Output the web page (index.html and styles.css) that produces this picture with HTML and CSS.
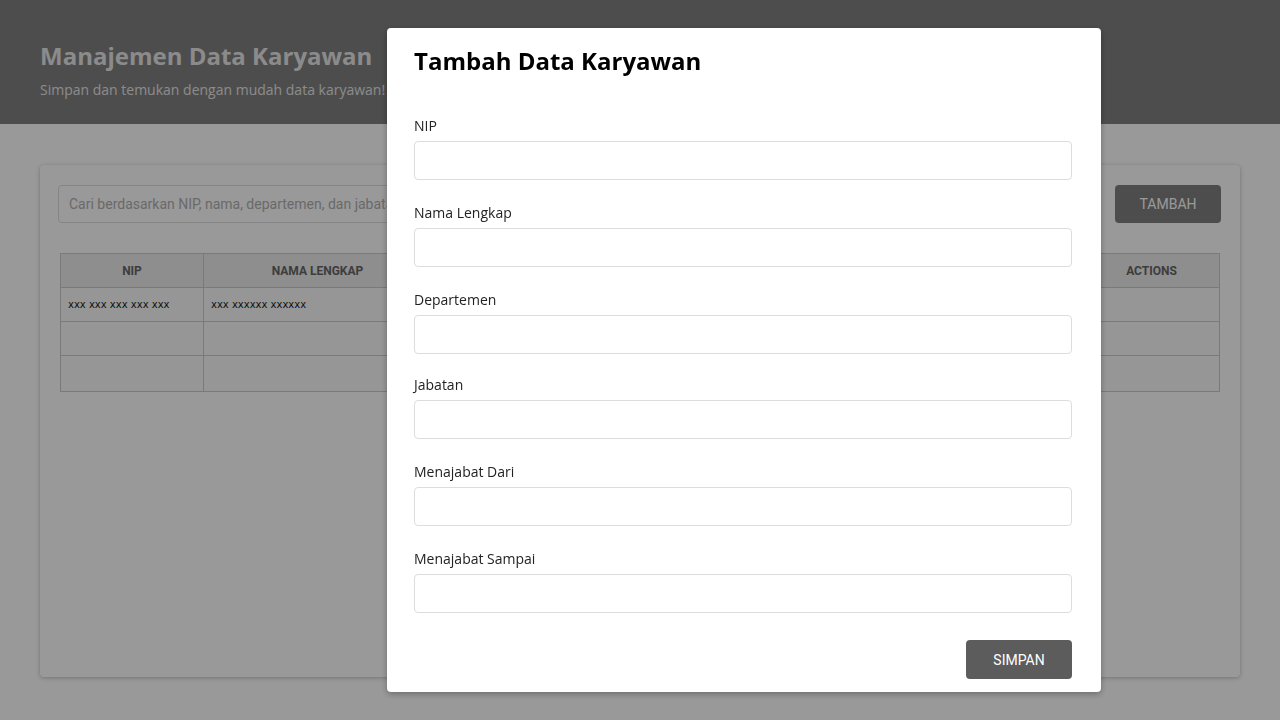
FILE: index.html
```html
<!DOCTYPE html>
<html lang="id">
<head>
<meta charset="utf-8">
<title>Manajemen Data Karyawan</title>
<link rel="stylesheet" href="styles.css">
</head>
<body>
<header class="hero">
  <h1 class="hero-title">Manajemen Data Karyawan</h1>
  <p class="hero-sub">Simpan dan temukan dengan mudah data karyawan!</p>
</header>
<main class="content">
  <section class="card">
    <div class="toolbar">
      <input class="search" type="text" placeholder="Cari berdasarkan NIP, nama, departemen, dan jabatan">
      <button class="btn btn-add">TAMBAH</button>
    </div>
    <table class="table">
      <thead>
        <tr>
          <th class="c-nip">NIP</th>
          <th class="c-nama">NAMA LENGKAP</th>
          <th>DEPARTEMEN</th>
          <th>JABATAN</th>
          <th>MENJABAT DARI</th>
          <th>MENJABAT SAMPAI</th>
          <th class="c-act">ACTIONS</th>
        </tr>
      </thead>
      <tbody>
        <tr><td>xxx xxx xxx xxx xxx</td><td>xxx xxxxxx xxxxxx</td><td></td><td></td><td></td><td></td><td></td></tr>
        <tr><td></td><td></td><td></td><td></td><td></td><td></td><td></td></tr>
        <tr class="last"><td></td><td></td><td></td><td></td><td></td><td></td><td></td></tr>
      </tbody>
    </table>
  </section>
</main>
<div class="overlay"></div>
<div class="modal">
  <h2 class="modal-title">Tambah Data Karyawan</h2>
  <form class="form">
    <div class="field"><label>NIP</label><input type="text"></div>
    <div class="field"><label>Nama Lengkap</label><input type="text"></div>
    <div class="field field-tight"><label>Departemen</label><input type="text"></div>
    <div class="field"><label>Jabatan</label><input type="text"></div>
    <div class="field"><label>Menajabat Dari</label><input type="text"></div>
    <div class="field"><label>Menajabat Sampai</label><input type="text"></div>
    <div class="actions"><button type="button" class="btn btn-save">SIMPAN</button></div>
  </form>
</div>
</body>
</html>
```
FILE: styles.css
```css
* { box-sizing: border-box; }
html, body { margin: 0; padding: 0; }
body {
  width: 1280px;
  height: 720px;
  overflow: hidden;
  background: #fff;
  font-family: "Open Sans", sans-serif;
}
.hero {
  height: 124px;
  background: #808080;
  padding: 39px 40px 0;
}
.hero-title {
  margin: 0;
  font-size: 24px;
  line-height: 34px;
  font-weight: 700;
  color: #e8e8e8;
}
.hero-sub {
  margin: 7px 0 0;
  font-size: 14px;
  line-height: 20px;
  color: #e8e8e8;
}
.content {
  padding: 41px 40px 0;
}
.card {
  height: 512px;
  background: #fff;
  border-radius: 4px;
  box-shadow: 0 1px 4px rgba(0,0,0,0.25);
  padding: 20px 18px;
}
.toolbar {
  display: flex;
  gap: 15px;
}
.search {
  flex: 1;
  height: 38px;
  border: 1px solid #ddd;
  border-radius: 4px;
  padding: 0 10px;
  font-family: Roboto, sans-serif;
  font-size: 14px;
}
.search::placeholder { color: #b0b0b0; }
.btn {
  border: none;
  border-radius: 4px;
  color: #fff;
  font-family: Roboto, sans-serif;
  font-size: 14px;
  font-weight: 400;
  cursor: pointer;
}
.btn-add {
  width: 106px;
  height: 38px;
  background: #808080;
  margin-right: 1px;
}
.table {
  margin: 30px 2px 0;
  width: 1160px;
  border-collapse: collapse;
  table-layout: fixed;
}
.table th, .table td {
  border: 1px solid #ccc;
  height: 34px;
}
.table th {
  background: #ededed;
  font-family: Roboto, sans-serif;
  font-size: 12px;
  font-weight: 700;
  color: #666;
  text-align: center;
}
.table td {
  background: #fafafa;
  font-family: "DejaVu Sans", sans-serif;
  font-size: 10px;
  color: #222;
  padding: 0 7px;
}
.table tr.last td { height: 36px; }
.c-nip { width: 143px; }
.c-nama { width: 228px; }
.c-act { width: 136px; }
.overlay {
  position: fixed;
  inset: 0;
  background: rgba(0,0,0,0.4);
}
.modal {
  position: fixed;
  left: 387px;
  top: 28px;
  width: 714px;
  height: 664px;
  background: #fff;
  border-radius: 4px;
  box-shadow: 0 2px 6px rgba(0,0,0,0.3);
  padding: 16px 29px 13px 27px;
}
.modal-title {
  margin: 0 0 38px;
  font-size: 24px;
  line-height: 34px;
  font-weight: 700;
  color: #000;
}
.form { display: flex; flex-direction: column; }
.field {
  display: flex;
  flex-direction: column;
  margin-bottom: 23px;
}
.field-tight { margin-bottom: 21px; }
.field label {
  font-size: 14px;
  line-height: 20px;
  color: #222;
  margin-bottom: 5px;
}
.field input {
  height: 39px;
  border: 1px solid #ddd;
  border-radius: 4px;
  padding: 0 10px;
  font-family: "Open Sans", sans-serif;
  font-size: 14px;
}
.actions {
  display: flex;
  justify-content: flex-end;
  margin-top: 4px;
}
.btn-save {
  width: 106px;
  height: 39px;
  background: #5c5c5c;
}
```
